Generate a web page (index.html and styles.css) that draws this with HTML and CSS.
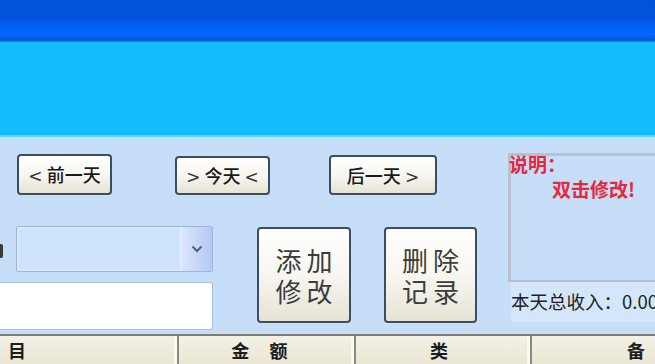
FILE: index.html
```html
<!DOCTYPE html>
<html lang="zh-CN">
<head>
<meta charset="utf-8">
<title>记账</title>
<link rel="stylesheet" href="styles.css">
</head>
<body>
<div class="titlebar"></div>
<div class="banner"></div>
<div class="main">
  <div class="left">
    <div class="navrow">
      <button class="btn nav prev"><span class="arr">&lt;</span> 前一天</button>
      <button class="btn nav today"><span class="arr">&gt;</span> 今天 <span class="arr">&lt;</span></button>
      <button class="btn nav next">后一天 <span class="arr">&gt;</span></button>
    </div>
    <div class="formrow">
      <div class="fields">
        <div class="labelstub"></div>
        <div class="combo">
          <div class="combo-text"></div>
          <div class="combo-drop">
            <svg width="12" height="8" viewBox="0 0 12 8"><path d="M1.5 1.5 L6 6 L10.5 1.5" fill="none" stroke="#4d6185" stroke-width="2"/></svg>
          </div>
        </div>
        <div class="textbox"></div>
      </div>
      <button class="btn big add"><span class="ln">添加</span><span class="ln">修改</span></button>
      <button class="btn big del"><span class="ln">删除</span><span class="ln">记录</span></button>
    </div>
  </div>
  <div class="side">
    <div class="note">
      <div class="note-title">说明：</div>
      <div class="note-body">双击修改!</div>
    </div>
    <div class="total">本天总收入：0.00</div>
  </div>
</div>
<div class="thead">
  <div class="th c1">目</div>
  <div class="th c2">金&nbsp;&nbsp;&nbsp;额</div>
  <div class="th c3">类</div>
  <div class="th c4">备</div>
</div>
</body>
</html>
```
FILE: styles.css
```css
html, body {
  margin: 0;
  padding: 0;
  width: 655px;
  height: 364px;
  overflow: hidden;
  background: #c7def9;
  font-family: "Noto Sans CJK SC", "Noto Sans", sans-serif;
}

.titlebar {
  height: 42px;
  background: linear-gradient(to bottom, #0252d8 0px, #0154de 18px, #0162f2 27px, #0068ff 34px, #0060f0 38px, #0050d4 40px, #2a86f0 42px);
}

.banner {
  height: 93px;
  background: #14bdfc;
  border-bottom: 2px solid #5fd3ff;
}

.main {
  display: flex;
  height: 197px;
}

.left {
  width: 508px;
  display: flex;
  flex-direction: column;
}

.btn {
  box-sizing: border-box;
  border: 2px solid #3c4c62;
  border-radius: 4px;
  background: linear-gradient(to bottom, #ffffff 0%, #f7f6f0 50%, #e6e3d6 100%);
  color: #111;
  font-family: "Noto Sans CJK SC", "Noto Sans", sans-serif;
  padding: 0;
  cursor: pointer;
}

.navrow {
  display: flex;
  align-items: flex-start;
  padding-top: 17px;
  height: 58px;
  box-sizing: border-box;
}

.nav {
  font-size: 18px;
  font-weight: 500;
  height: 41px;
  line-height: 37px;
  color: #1a1a1a;
  white-space: nowrap;
}

.arr {
  font-family: "DejaVu Sans", sans-serif;
  font-weight: 400;
  font-size: 17px;
  color: #333;
}

.prev { margin-left: 17px; width: 95px; }
.today { margin-left: 63px; width: 95px; margin-top: 2px; height: 39px; line-height: 35px; }
.next { margin-left: 59px; width: 108px; margin-top: 1px; height: 40px; line-height: 36px; }

.formrow {
  display: flex;
  align-items: flex-start;
  margin-top: 31px;
}

.fields {
  width: 213px;
  position: relative;
  display: flex;
  flex-direction: column;
}

.labelstub {
  position: absolute;
  left: 0;
  top: 18px;
  width: 3px;
  height: 14px;
  background: #3a3a3a;
  border-radius: 0 2px 2px 0;
}

.combo {
  margin-left: 16px;
  width: 197px;
  height: 46px;
  box-sizing: border-box;
  border: 1px solid #9fb4d8;
  background: #cde2fb;
  display: flex;
  border-radius: 2px;
}

.combo-text {
  flex: 1;
  border: 2px solid #d9e8fb;
}

.combo-drop {
  width: 30px;
  background: linear-gradient(to right, #d9e6fc, #b3c8f5);
  display: flex;
  align-items: center;
  justify-content: center;
  border-left: 1px solid #e4eefd;
}

.textbox {
  margin-top: 10px;
  width: 213px;
  height: 48px;
  box-sizing: border-box;
  background: #ffffff;
  border: 1px solid #a9bfdc;
  border-left: none;
  border-radius: 0 3px 3px 0;
}

.big {
  font-size: 26px;
  line-height: 31px;
  letter-spacing: 5px;
  color: #3c3c3c;
  font-weight: 400;
  height: 96px;
  margin-top: 1px;
  display: flex;
  flex-direction: column;
  align-items: center;
  justify-content: center;
  gap: 0;
}

.ln {
  display: block;
  padding-left: 5px;
}

.add { margin-left: 44px; width: 94px; }
.del { margin-left: 33px; width: 93px; }

.side {
  width: 147px;
  display: flex;
  flex-direction: column;
  padding-top: 16px;
}

.note {
  height: 129px;
  box-sizing: border-box;
  border-top: 3px solid #b7c0cc;
  border-left: 3px solid #b7c0cc;
  border-bottom: 2px solid #b7c0cc;
}

.note-title {
  color: #e6283c;
  font-size: 19px;
  font-weight: 700;
  line-height: 20px;
  margin-left: -2px;
  margin-top: -2px;
}

.note-body {
  color: #e6283c;
  font-size: 19px;
  font-weight: 700;
  line-height: 22px;
  margin-left: 41px;
  margin-top: 4px;
  white-space: nowrap;
}

.total {
  height: 40px;
  margin-left: 3px;
  background: #d3e6fb;
  font-size: 18.5px;
  line-height: 38px;
  color: #222;
  white-space: nowrap;
  overflow: hidden;
}

.thead {
  display: flex;
  height: 32px;
  border-top: 2px solid #7d7d76;
  box-sizing: border-box;
  background: linear-gradient(to bottom, #f3f1e6, #e9e5d2);
  overflow: hidden;
}

.th {
  box-sizing: border-box;
  height: 30px;
  line-height: 28px;
  font-size: 18px;
  font-weight: 700;
  color: #1d1d1d;
  border-right: 2px solid #8c8a80;
  box-shadow: inset -3px 0 0 #faf9f2;
  text-align: center;
  white-space: nowrap;
  overflow: hidden;
}

.c1 { width: 179px; text-align: left; padding-left: 8px; }
.c2 { width: 177px; padding-right: 12px; letter-spacing: 2px; }
.c3 { width: 176px; padding-right: 8px; }
.c4 { flex: 1; border-right: none; box-shadow: none; text-align: left; padding-left: 95px; }
```
